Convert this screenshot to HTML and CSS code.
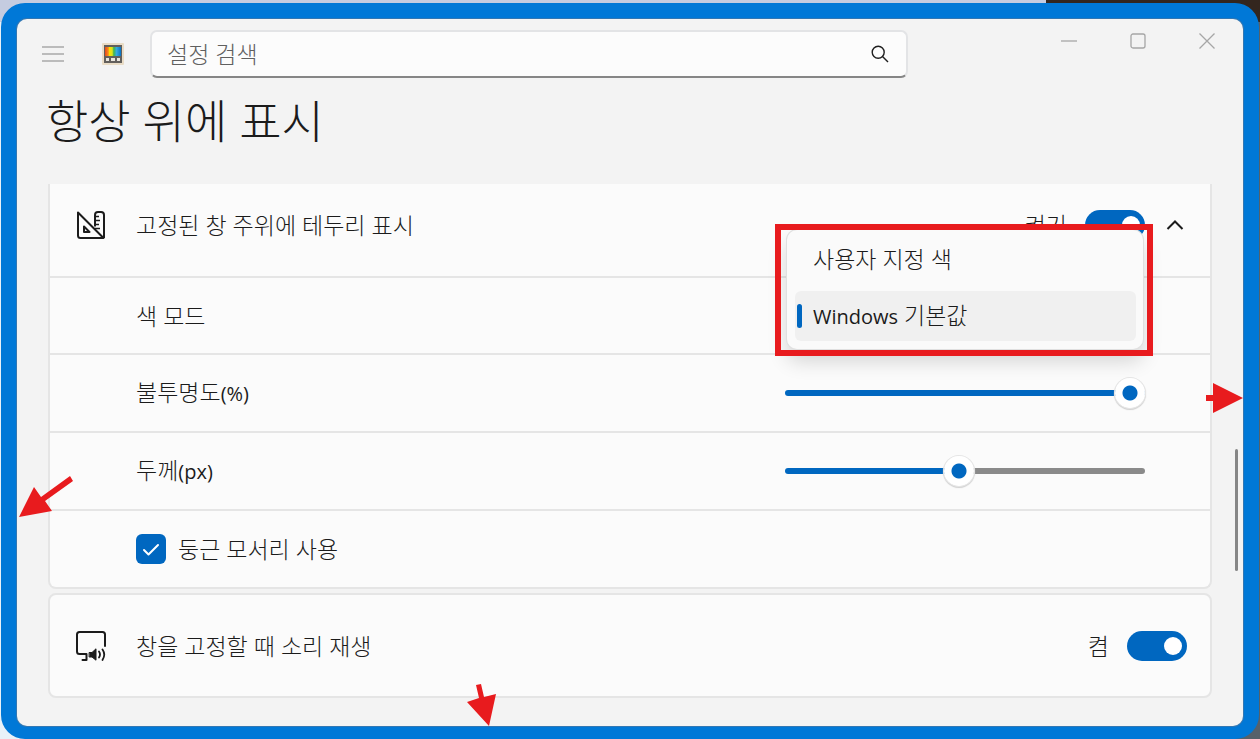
FILE: index.html
```
<!DOCTYPE html>
<html lang="ko">

<head>
  <meta charset="UTF-8">
  <meta name="viewport" content="width=device-width, initial-scale=1">
  <title>항상 위에 표시</title>
  <link rel="stylesheet" href="styles.css">
</head>

<body>
  <div class="window">
    <header class="titlebar">
      <button class="menu-button" type="button" aria-label="메뉴">
        <svg width="22" height="18" viewBox="0 0 22 18" fill="none" stroke="#a9a9a9" stroke-width="1.600">
          <path d="M0 2H22M0 9H22M0 16H22"/>
        </svg>
      </button>
      <svg class="logo" width="22" height="22" viewBox="0 0 22 22">
        <defs>
          <linearGradient id="rainbow">
            <stop offset="0" stop-color="#e5481d"/>
            <stop offset=".2" stop-color="#f58a1f"/>
            <stop offset=".28" stop-color="#fde100"/>
            <stop offset=".45" stop-color="#d9e021"/>
            <stop offset=".55" stop-color="#3fb549"/>
            <stop offset=".72" stop-color="#35a8e0"/>
            <stop offset="1" stop-color="#0873c4"/>
          </linearGradient>
        </defs>
        <rect width="22" height="22" rx="1" fill="#e9dcc6"/>
        <rect x="2" y="2" width="18" height="18" fill="#625f5c"/>
        <rect x="3" y="4" width="16" height="9" fill="url(#rainbow)"/>
        <path d="M4 15h3v3H4zM9 15h4v3H9zM15 15h3v3h-3z" fill="#e9e5dd"/>
      </svg>
      <div class="search">
        <input type="text" placeholder="설정 검색" aria-label="설정 검색">
        <svg width="18" height="18" viewBox="0 0 18 18" fill="none" stroke="#1f1f1f" stroke-width="1.400">
          <circle cx="7.200" cy="7.200" r="6"/>
          <path d="M11.500 11.500L17 17"/>
        </svg>
      </div>
      <div class="caption">
        <button type="button" aria-label="최소화">
          <svg width="16" height="16" viewBox="0 0 16 16" fill="none" stroke="#a6a6a6" stroke-width="1.300"><path d="M0 8H16"/></svg>
        </button>
        <button type="button" aria-label="최대화">
          <svg width="16" height="16" viewBox="0 0 16 16" fill="none" stroke="#a6a6a6" stroke-width="1.300"><rect x="1" y="1" width="14" height="14" rx="2"/></svg>
        </button>
        <button type="button" aria-label="닫기">
          <svg width="16" height="16" viewBox="0 0 16 16" fill="none" stroke="#a6a6a6" stroke-width="1.300"><path d="M.5 .5L15.500 15.500M15.500 .5L.5 15.500"/></svg>
        </button>
      </div>
    </header>

    <h1>항상 위에 표시</h1>

    <main class="settings">
      <section class="card card-open">
        <div class="row row-head">
          <svg class="row-icon" width="30" height="30" viewBox="0 0 30 30" fill="none" stroke="#1b1b1b" stroke-width="2" stroke-linejoin="round">
            <path d="M2 2.500V25.500Q2 28 4.500 28H27.500Z"/>
            <path d="M8 16.500V22H13.500Z"/>
            <path d="M19 16.500V5Q19 2 22 2H25Q28 2 28 5V28"/>
            <path d="M19 6.500H23M19 10.500H24M19 14.500H23M19 18.500H24" stroke-width="1.600"/>
          </svg>
          <label class="name" for="border">고정된 창 주위에 테두리 표시</label>
          <span class="state">켜기</span>
          <input class="toggle" id="border" type="checkbox" role="switch" checked>
          <button class="chevron" type="button" aria-label="접기">
            <svg width="18" height="12" viewBox="0 0 18 12" fill="none" stroke="#1b1b1b" stroke-width="2"><path d="M1.500 10L9 2.500L16.500 10"/></svg>
          </button>
        </div>
        <div class="row">
          <span class="name" id="mode">색 모드</span>
          <div class="control">
            <div class="dropdown" role="listbox" aria-labelledby="mode">
              <button type="button" role="option" aria-selected="false">사용자 지정 색</button>
              <button class="selected" type="button" role="option" aria-selected="true"><span class="latin">Windows</span> 기본값</button>
            </div>
            <div class="highlight"></div>
          </div>
        </div>
        <div class="row">
          <label class="name" for="opacity">불투명도<span class="latin">(%)</span></label>
          <div class="control">
            <input class="slider" id="opacity" type="range" min="0" max="100" value="100" style="--fill: 100%">
          </div>
        </div>
        <div class="row">
          <label class="name" for="thickness">두께<span class="latin">(px)</span></label>
          <div class="control">
            <input class="slider" id="thickness" type="range" min="1" max="30" value="15" style="--fill: 48%">
          </div>
        </div>
        <div class="row">
          <label class="check">
            <span class="box">
              <input type="checkbox" checked>
              <svg width="18" height="14" viewBox="0 0 18 14" fill="none" stroke="#fff" stroke-width="2" stroke-linecap="round" stroke-linejoin="round"><path d="M2 8L6.500 12.500L16 3"/></svg>
            </span>
            둥근 모서리 사용
          </label>
        </div>
      </section>

      <section class="card">
        <div class="row row-sound">
          <svg class="row-icon" width="30" height="30" viewBox="0 0 30 30" fill="none" stroke="#1b1b1b" stroke-width="2" stroke-linecap="round" stroke-linejoin="round">
            <path d="M29 15V3.500Q29 1 26.500 1H3.500Q1 1 1 3.500V20.500Q1 23 3.500 23H10.500V29M6.500 29H10.500"/>
            <path d="M13.500 21.500H16L20 17.800V29.200L16 26H13.500Z" fill="#1b1b1b" stroke-width="1"/>
            <path d="M23 20.500Q25 23.500 23 26.500M26.500 18.500Q30 23.500 26.500 29" stroke-width="1.800"/>
          </svg>
          <label class="name" for="sound">창을 고정할 때 소리 재생</label>
          <span class="state">켬</span>
          <input class="toggle" id="sound" type="checkbox" role="switch" checked>
        </div>
      </section>
    </main>

    <div class="scrollbar"></div>

    <svg class="arrow arrow-left" width="54" height="42" viewBox="0 0 54 42" fill="#e81b1e">
      <path d="M0 41L15 11L22 21L51 0L54 5L26 25L33 35Z"/>
    </svg>
    <svg class="arrow arrow-right" width="37" height="30" viewBox="0 0 37 30" fill="#e81b1e">
      <path d="M0 12H7V0L37 15L7 30V18H0Z"/>
    </svg>
    <svg class="arrow arrow-bottom" width="30" height="42" viewBox="0 0 30 42" fill="#e81b1e">
      <path d="M9 1L14 0L17 13L29 10L22 42L0 18L12 14Z"/>
    </svg>
  </div>
</body>

</html>
```
FILE: styles.css
```
* {
  box-sizing: border-box;
}

body {
  margin: 0;
  min-height: 100vh;
  padding: 3px 1px 0;
  display: flex;
  background:
    linear-gradient(90deg, #c5cce0 83%, #33261e 83%) top / 100% 22px no-repeat,
    linear-gradient(90deg, #e8f1f8 50%, #56616a 50%);
  color: #1b1b1b;
  font-family: "Open Sans", "Noto Sans CJK KR", sans-serif;
  font-size: 23px;
  font-weight: 300;
  line-height: 30px;
}

button,
input {
  margin: 0;
  padding: 0;
  border: 0;
  background: none;
  color: inherit;
  font: inherit;
}

svg {
  display: block;
  flex: none;
}

.window {
  position: relative;
  flex: 1;
  border: 16px solid #0078d7;
  border-bottom-width: 13px;
  border-radius: 24px;
  background: #0078d7;
}

/* the window surface has its own, tighter corners */
.window::before {
  content: "";
  position: absolute;
  inset: 0;
  border-radius: 10px;
  background: #f3f3f3;
  box-shadow: 0 0 0 1px #3277b3;
}

.titlebar {
  position: relative;
  display: flex;
  align-items: center;
  padding: 11px 12px 0 25px;
}

.menu-button {
  margin-right: 38px;
}

.logo {
  margin-right: 26px;
}

.search {
  flex: 1;
  max-width: 758px;
  height: 48px;
  display: flex;
  align-items: center;
  padding: 0 17px 0 15px;
  border: 2px solid #e3e4e6;
  border-bottom-color: #868686;
  border-radius: 7px;
  background: #fcfcfc;
}

.search input {
  flex: 1;
  min-width: 0;
  outline: none;
}

.search input::placeholder {
  color: #606060;
  opacity: 1;
}

.caption {
  margin-left: auto;
  align-self: flex-start;
  display: flex;
  gap: 21px;
}

.caption button {
  width: 48px;
  height: 22px;
  display: grid;
  place-items: center;
}

h1 {
  position: relative;
  margin: 0;
  padding: 12px 29px 34px;
  font-size: 46px;
  font-weight: 300;
  line-height: 60px;
}

.settings {
  position: relative;
  display: grid;
  gap: 4px;
  padding: 0 31px 28px;
}

.card {
  border: 2px solid #e5e5e5;
  border-radius: 8px;
  background: #fbfbfb;
}

/* its top edge is scrolled out of view */
.card-open {
  border-top: 0;
  border-radius: 0 0 8px 8px;
}

.row {
  min-height: 78px;
  display: flex;
  align-items: center;
  padding: 0 65px 0 86px;
}

.row + .row {
  border-top: 2px solid #e5e5e5;
}

.row-head {
  min-height: 92px;
  padding: 0 26px 10px;
}

.row-head + .row {
  min-height: 77px;
}

.row-sound {
  min-height: 101px;
  padding: 0 23px 0 26px;
}

.row-icon {
  margin-right: 30px;
}

.name {
  margin-right: auto;
}

.latin {
  font-size: 20px;
  font-weight: 400;
}

.state {
  margin-right: 18px;
}

.toggle {
  appearance: none;
  width: 60px;
  height: 30px;
  display: flex;
  align-items: center;
  justify-content: flex-end;
  padding: 0 5px;
  border-radius: 15px;
  background: #0067c0;
}

.toggle::before {
  content: "";
  width: 18px;
  height: 18px;
  border-radius: 50%;
  background: #fff;
}

.chevron {
  margin-left: 21px;
}

.control {
  position: relative;
  align-self: stretch;
  flex: 0 1 360px;
  display: flex;
  align-items: center;
}

.dropdown {
  position: absolute;
  z-index: 1;
  top: -48px;
  left: 2px;
  right: 2px;
  display: grid;
  gap: 7px;
  padding: 4px 7px 8px 8px;
  border-radius: 10px;
  background: #fafafa;
  box-shadow: 0 0 0 1px #e0e0e0, 0 12px 20px rgba(0, 0, 0, .16);
}

.dropdown button {
  position: relative;
  height: 50px;
  padding: 0 18px;
  border-radius: 6px;
  text-align: left;
}

.dropdown .selected {
  background: #f0f0f0;
}

.dropdown .selected::before {
  content: "";
  position: absolute;
  top: 13px;
  left: 2px;
  width: 5px;
  height: 24px;
  border-radius: 3px;
  background: #0067c0;
}

.highlight {
  position: absolute;
  z-index: 2;
  top: -54px;
  left: -10px;
  right: -8px;
  height: 132px;
  border: 6px solid #e81b1e;
}

.slider {
  appearance: none;
  width: 100%;
  height: 32px;
}

.slider::-webkit-slider-runnable-track {
  height: 6px;
  border-radius: 3px;
  background: linear-gradient(90deg, #0067c0 var(--fill), #8a8a8a var(--fill));
}

.slider::-webkit-slider-thumb {
  appearance: none;
  width: 30px;
  height: 30px;
  margin-top: -12px;
  border-radius: 50%;
  background: radial-gradient(circle, #0067c0 7px, #fff 8px);
  box-shadow: 0 0 0 1px #e6e6e6, 0 1px 1px 1px #cfcfcf;
}

.check {
  display: flex;
  align-items: center;
  gap: 12px;
}

.box {
  display: grid;
  place-items: center;
}

.box input,
.box svg {
  grid-area: 1 / 1;
}

.box input {
  appearance: none;
  width: 30px;
  height: 30px;
  border-radius: 6px;
  background: #0067c0;
}

.box svg {
  z-index: 1;
}

.scrollbar {
  position: absolute;
  top: 430px;
  right: 5px;
  width: 3px;
  height: 122px;
  border-radius: 2px;
  background: #868686;
}

.arrow {
  position: absolute;
}

.arrow-left {
  top: 457px;
  left: 2px;
}

.arrow-right {
  top: 364px;
  right: 0;
}

.arrow-bottom {
  bottom: 0;
  left: 450px;
}
```
